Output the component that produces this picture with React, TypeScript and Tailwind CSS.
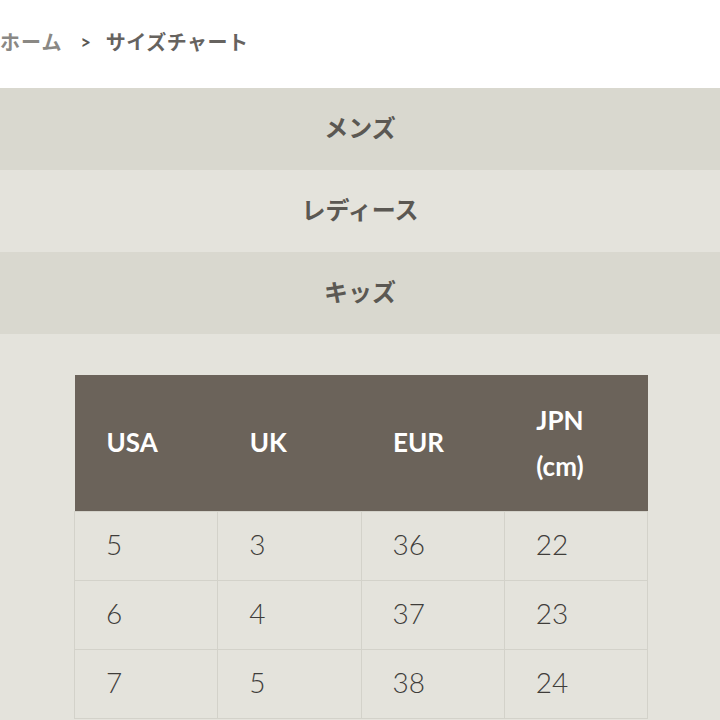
import React from 'react';

const rows = [
  ['5', '3', '36', '22'],
  ['6', '4', '37', '23'],
  ['7', '5', '38', '24'],
];

const tabs = [
  { label: 'メンズ', bg: 'bg-[#d9d8cf]' },
  { label: 'レディース', bg: 'bg-[#e4e3dc]' },
  { label: 'キッズ', bg: 'bg-[#d9d8cf]' },
];

const App = () => {
  return (
    <div className="w-[720px] h-[720px] overflow-hidden bg-[#e4e3dc] font-['Lato','Noto_Sans_CJK_JP',sans-serif]">
      {/* Breadcrumb */}
      <div className="h-[88px] bg-white flex items-center pb-[4px] text-[20px] font-bold font-['Noto_Sans_CJK_JP',sans-serif]">
        <span className="text-[#8a8884] tracking-[1px]">ホーム</span>
        <span className="text-[#5a5753] ml-[18px] mr-[15px] font-['Lato',sans-serif] text-[18px]">&gt;</span>
        <span className="text-[#66635f] tracking-[0.5px]">サイズチャート</span>
      </div>

      {/* Category tabs */}
      {tabs.map((t) => (
        <div
          key={t.label}
          className={`${t.bg} h-[82px] flex items-center justify-center pb-[4px] text-[24px] font-bold text-[#5b5853] font-['Noto_Sans_CJK_JP',sans-serif]`}
        >
          {t.label}
        </div>
      ))}

      {/* Size table */}
      <div className="pt-[41px] pl-[74px]">
        <table className="w-[574px] border-collapse table-fixed">
          <thead>
            <tr className="bg-[#6b635a] h-[136px]">
              {['USA', 'UK', 'EUR'].map((h) => (
                <th key={h} className="text-left pl-[32px] text-white text-[26px] font-bold">
                  {h}
                </th>
              ))}
              <th className="text-left pl-[32px] text-white text-[26px] font-bold leading-[46px]">
                JPN
                <br />
                (cm)
              </th>
            </tr>
          </thead>
          <tbody>
            {rows.map((r, i) => (
              <tr key={i} className="h-[69px]">
                {r.map((c, j) => (
                  <td
                    key={j}
                    className="border border-[#d3d2ca] pl-[31px] pb-[3px] text-[28px] font-light text-[#3f3d3a]"
                  >
                    {c}
                  </td>
                ))}
              </tr>
            ))}
          </tbody>
        </table>
      </div>
    </div>
  );
};

export default App;
